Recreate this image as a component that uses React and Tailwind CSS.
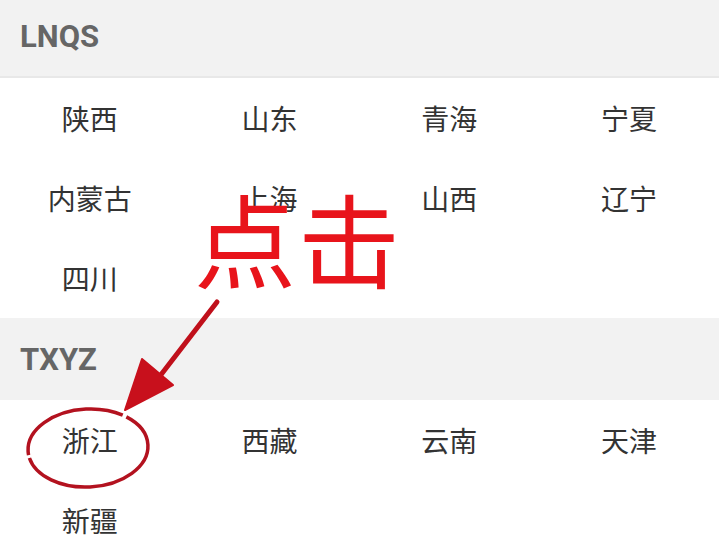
import React from 'react';

const groups = [
    { letter: 'LNQS', items: ['陕西', '山东', '青海', '宁夏', '内蒙古', '上海', '山西', '辽宁', '四川'] },
    { letter: 'TXYZ', items: ['浙江', '西藏', '云南', '天津', '新疆'] },
];

const cjk = { fontFamily: '"Noto Sans CJK SC", "Noto Sans", sans-serif' };

const ProvinceGroup = ({ letter, items, first }) => (
    <div>
        <div
            className={
                first
                    ? 'h-[78px] bg-[#f2f2f2] border-b-2 border-[#e8e8e8] flex items-center px-5 pb-[4px]'
                    : 'h-[82px] bg-[#f2f2f2] flex items-center px-5'
            }
        >
            <span className="text-[31px] font-bold text-[#666666] leading-none" style={{ fontFamily: 'Roboto, "Liberation Sans", sans-serif' }}>
                {letter}
            </span>
        </div>
        <div className="grid grid-cols-4 bg-white">
            {items.map((name) => (
                <div key={name} className="h-[80px] flex items-center justify-center">
                    <span className="text-[28px] text-[#333333] leading-none" style={cjk}>
                        {name}
                    </span>
                </div>
            ))}
        </div>
    </div>
);

const App = () => {
    return (
        <div className="relative w-[719px] h-[558px] overflow-hidden bg-white">
            {groups.map((g, i) => (
                <ProvinceGroup key={g.letter} letter={g.letter} items={g.items} first={i === 0} />
            ))}

            {/* tap hint */}
            <div
                className="absolute left-[194px] top-[186px] text-[102px] leading-none text-[#e8141b] font-normal tracking-[2px]"
                style={cjk}
            >
                点击
            </div>

            <svg className="absolute inset-0 pointer-events-none" width="719" height="558" viewBox="0 0 719 558">
                <line x1="217" y1="302" x2="160" y2="376" stroke="#c0101b" strokeWidth="5" strokeLinecap="round" />
                <polygon points="125,410 142,359 173,385" fill="#c8101c" stroke="#c8101c" strokeWidth="2" strokeLinejoin="round" />
                <ellipse
                    cx="88"
                    cy="448"
                    rx="60"
                    ry="39"
                    fill="none"
                    stroke="#b3121f"
                    strokeWidth="3.5"
                    strokeDasharray="150 3 120 4 200"
                    transform="rotate(-3 88 448)"
                />
            </svg>
        </div>
    );
};

export default App;
